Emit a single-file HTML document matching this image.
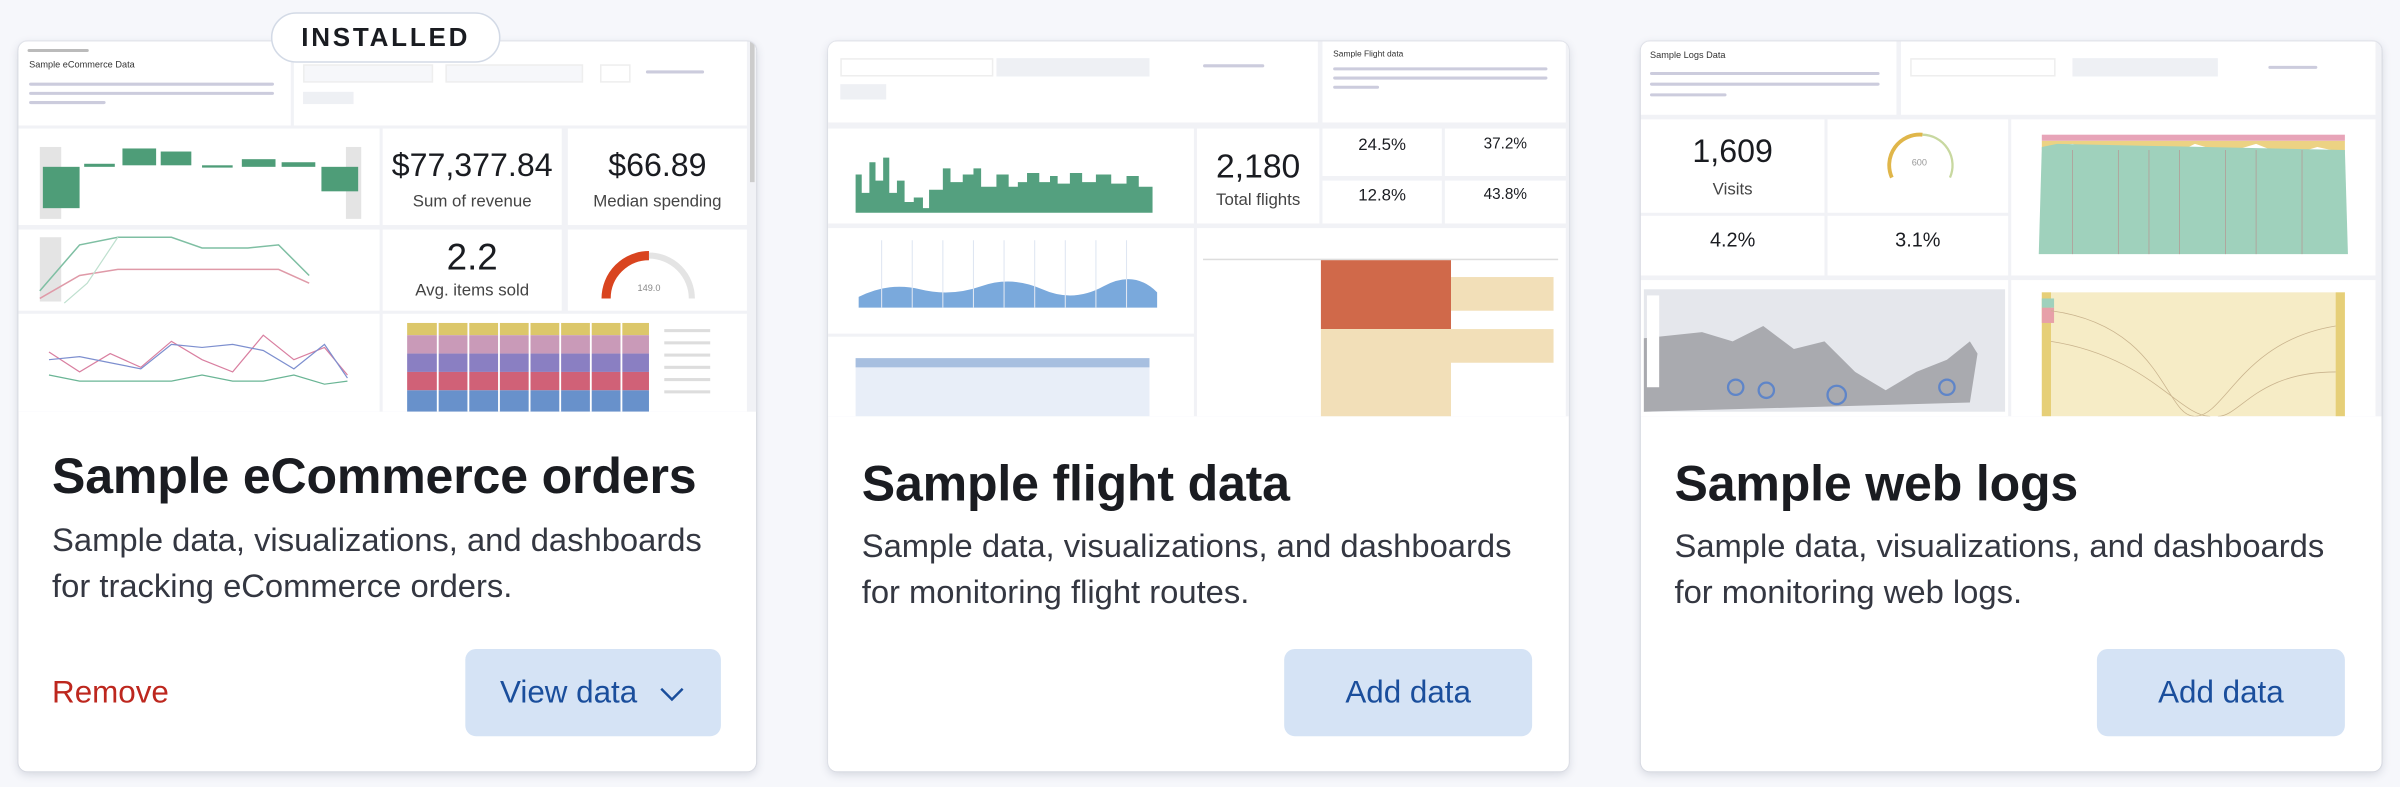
<!DOCTYPE html>
<html><head><meta charset="utf-8">
<style>
*{box-sizing:border-box;margin:0;padding:0}
html,body{width:2400px;height:786px;overflow:hidden;background:#f6f7fb}
#s{position:absolute;left:0;top:0;width:1568px;height:514px;transform:scale(1.5306);transform-origin:0 0;font-family:"Liberation Sans",Arial,sans-serif}
.card{position:absolute;top:27px;width:483px;height:477px;background:#fff;border-radius:6px;box-shadow:0 2px 6px rgba(60,70,100,.18),0 0 1px rgba(60,70,100,.2);overflow:hidden}
.img{position:absolute;left:0;top:0;width:484px;height:242px;background:#f1f2f6;overflow:hidden}
.p{position:absolute;background:#fff}
.t{position:absolute;left:22px;font-size:32.7px;font-weight:700;color:#1a1c21;letter-spacing:-.1px}
.d{position:absolute;left:22px;font-size:21.4px;line-height:30px;color:#343741}
.btn{position:absolute;top:397px;width:163px;height:57px;border-radius:7px;background:#d5e3f5;color:#1a4e9c;font-size:20.5px;display:flex;align-items:center;justify-content:center}
.big{position:absolute;width:100%;text-align:center;color:#1a1c21}
.lbl{position:absolute;width:100%;text-align:center;color:#444;font-size:11px}
.tiny{position:absolute;height:2px;background:#ccd;border-radius:1px}
</style></head><body><div id="s">

<!-- CARD 1 -->
<div class="card" style="left:12px;width:482px">
 <div class="img">
  <div class="p" style="left:0;top:0;width:178px;height:55px">
   <div class="tiny" style="left:6px;top:5px;width:40px;background:#bbb"></div>
   <div style="position:absolute;left:7px;top:13px;font-size:6px;color:#333">Sample eCommerce Data</div>
   <div class="tiny" style="left:7px;top:27px;width:160px"></div><div class="tiny" style="left:7px;top:33px;width:160px"></div><div class="tiny" style="left:7px;top:39px;width:50px"></div>
  </div>
  <div class="p" style="left:180px;top:0;width:296px;height:55px">
   <div style="position:absolute;left:6px;top:15px;width:85px;height:12px;background:#f6f7fa;border:1px solid #eee"></div>
   <div style="position:absolute;left:99px;top:15px;width:90px;height:12px;background:#f6f7fa;border:1px solid #eee"></div>
   <div style="position:absolute;left:200px;top:15px;width:20px;height:12px;border:1px solid #eee"></div>
   <div class="tiny" style="left:230px;top:19px;width:38px"></div>
   <div style="position:absolute;left:6px;top:33px;width:33px;height:8px;background:#eef0f4"></div>
  </div>
  <div class="p" style="left:0;top:57px;width:236px;height:63px">
   <svg width="236" height="63"><rect x="14" y="12" width="14" height="47" fill="#e4e4e4"/><rect x="214" y="12" width="10" height="47" fill="#e4e4e4"/>
   <rect x="16" y="25" width="24" height="27" fill="#4e9d78"/><rect x="43" y="23" width="20" height="2" fill="#4e9d78"/><rect x="68" y="13" width="22" height="11" fill="#4e9d78"/><rect x="93" y="15" width="20" height="9" fill="#4e9d78"/><rect x="120" y="24" width="20" height="1.5" fill="#4e9d78"/><rect x="146" y="20" width="22" height="5" fill="#4e9d78"/><rect x="172" y="22" width="22" height="3" fill="#4e9d78"/><rect x="198" y="25" width="24" height="16" fill="#4e9d78"/></svg>
  </div>
  <div class="p" style="left:238px;top:57px;width:117px;height:63px"><div class="big" style="top:13px;font-size:21px">$77,377.84</div><div class="lbl" style="top:42px">Sum of revenue</div></div>
  <div class="p" style="left:359px;top:57px;width:117px;height:63px"><div class="big" style="top:13px;font-size:21px">$66.89</div><div class="lbl" style="top:42px">Median spending</div></div>
  <div class="p" style="left:0;top:123px;width:236px;height:53px">
   <svg width="236" height="53"><rect x="14" y="5" width="14" height="42" fill="#e4e4e4"/>
   <polyline points="14,40 40,10 65,5 100,5 120,12 150,12 170,10 190,30" fill="none" stroke="#7fbfa3" stroke-width="1"/>
   <polyline points="14,45 40,30 65,26 100,26 150,26 170,26 190,35" fill="none" stroke="#df9aa8" stroke-width="1"/>
   <polyline points="30,48 45,35 65,5" fill="none" stroke="#bfe0cf" stroke-width=".8"/></svg>
  </div>
  <div class="p" style="left:238px;top:123px;width:117px;height:53px"><div class="big" style="top:5px;font-size:24px">2.2</div><div class="lbl" style="top:34px">Avg. items sold</div></div>
  <div class="p" style="left:359px;top:123px;width:117px;height:53px">
   <svg width="117" height="53"><path d="M25,45 A28,28 0 0 1 53,17" fill="none" stroke="#d9441f" stroke-width="6"/><path d="M53,17 A28,28 0 0 1 81,45" fill="none" stroke="#e4e4e4" stroke-width="4"/><text x="53" y="40" font-size="6" fill="#888" text-anchor="middle" font-family="Liberation Sans">149.0</text></svg>
  </div>
  <div class="p" style="left:0;top:178px;width:236px;height:64px">
   <svg width="236" height="64"><polyline points="20,25 40,38 60,26 80,35 100,18 120,30 140,38 160,14 180,30 200,22 215,40" fill="none" stroke="#d97fa0" stroke-width=".8"/><polyline points="20,30 40,28 60,32 80,36 100,20 120,22 140,20 160,24 180,36 200,20 215,42" fill="none" stroke="#7d8fcf" stroke-width=".8"/><polyline points="20,40 40,44 60,44 80,44 100,44 120,40 140,44 160,44 180,40 200,46 215,44" fill="none" stroke="#6ab595" stroke-width=".8"/></svg>
  </div>
  <div class="p" style="left:238px;top:178px;width:238px;height:64px">
   <svg width="238" height="64">
   <rect x="16" y="6" width="158" height="8" fill="#dcc76a"/><rect x="16" y="14" width="158" height="12" fill="#c99ab8"/><rect x="16" y="26" width="158" height="12" fill="#8a7fc2"/><rect x="16" y="38" width="158" height="12" fill="#d06177"/><rect x="16" y="50" width="158" height="14" fill="#6891cb"/>
   <g stroke="#fff" stroke-width="1.2"><line x1="36" y1="0" x2="36" y2="64"/><line x1="56" y1="0" x2="56" y2="64"/><line x1="76" y1="0" x2="76" y2="64"/><line x1="96" y1="0" x2="96" y2="64"/><line x1="116" y1="0" x2="116" y2="64"/><line x1="136" y1="0" x2="136" y2="64"/><line x1="156" y1="0" x2="156" y2="64"/></g>
   <g fill="#ddd"><rect x="184" y="10" width="30" height="2"/><rect x="184" y="18" width="30" height="2"/><rect x="184" y="26" width="30" height="2"/><rect x="184" y="34" width="30" height="2"/><rect x="184" y="42" width="30" height="2"/><rect x="184" y="50" width="30" height="2"/></g></svg>
  </div>
  <div style="position:absolute;left:478px;top:0;width:3px;height:92px;background:#ccc"></div>
 </div>
 <div class="t" style="top:265px">Sample eCommerce orders</div>
 <div class="d" style="top:311px">Sample data, visualizations, and dashboards<br>for tracking eCommerce orders.</div>
 <div style="position:absolute;left:22px;top:414px;font-size:20.5px;color:#bd271e">Remove</div>
 <div class="btn" style="left:292px;width:167px">View data<svg width="18" height="12" style="margin-left:14px" viewBox="0 0 18 12"><path d="M2,3 L9,10 L16,3" fill="none" stroke="#1a4e9c" stroke-width="1.6"/></svg></div>
</div>
<div style="position:absolute;left:177px;top:8px;width:150px;height:33px;border-radius:17px;background:#fff;border:1px solid #d3dae6;font-size:17px;font-weight:700;letter-spacing:1.8px;color:#1a1c21;display:flex;align-items:center;justify-content:center">INSTALLED</div>

<!-- CARD 2 -->
<div class="card" style="left:541px;width:484px">
 <div class="img" style="height:245px">
  <div class="p" style="left:0;top:0;width:320px;height:53px">
   <div style="position:absolute;left:8px;top:11px;width:100px;height:12px;border:1px solid #eee"></div>
   <div style="position:absolute;left:110px;top:11px;width:100px;height:12px;background:#eef0f4"></div>
   <div class="tiny" style="left:245px;top:15px;width:40px"></div>
   <div style="position:absolute;left:8px;top:28px;width:30px;height:10px;background:#eef0f4"></div>
  </div>
  <div class="p" style="left:323px;top:0;width:159px;height:53px"><div style="position:absolute;left:7px;top:6px;font-size:5.5px;color:#333">Sample Flight data</div><div class="tiny" style="left:7px;top:17px;width:140px"></div><div class="tiny" style="left:7px;top:23px;width:140px"></div><div class="tiny" style="left:7px;top:29px;width:30px"></div></div>
  <div class="p" style="left:0;top:57px;width:239px;height:62px">
   <svg width="239" height="62"><path d="M18,55 L18,30 L22,30 L22,42 L27,42 L27,22 L31,22 L31,34 L36,34 L36,19 L40,19 L40,42 L45,42 L45,34 L50,34 L50,48 L56,48 L56,45 L62,45 L62,52 L66,52 L66,40 L75,40 L75,26 L80,26 L80,35 L88,35 L88,30 L95,30 L95,26 L100,26 L100,38 L110,38 L110,30 L118,30 L118,38 L124,38 L124,35 L130,35 L130,29 L138,29 L138,35 L145,35 L145,31 L150,31 L150,36 L158,36 L158,29 L166,29 L166,35 L175,35 L175,30 L185,30 L185,36 L195,36 L195,31 L203,31 L203,38 L212,38 L212,55 Z" fill="#54a07f"/></svg>
  </div>
  <div class="p" style="left:241px;top:57px;width:80px;height:62px"><div class="big" style="top:12px;font-size:22px">2,180</div><div class="lbl" style="top:41px">Total flights</div></div>
  <div class="p" style="left:323px;top:57px;width:78px;height:31px"><div class="big" style="top:5px;font-size:11px">24.5%</div></div>
  <div class="p" style="left:403px;top:57px;width:79px;height:31px"><div class="big" style="top:5px;font-size:10px">37.2%</div></div>
  <div class="p" style="left:323px;top:91px;width:78px;height:28px"><div class="big" style="top:4px;font-size:11px">12.8%</div></div>
  <div class="p" style="left:403px;top:91px;width:79px;height:28px"><div class="big" style="top:4px;font-size:10px">43.8%</div></div>
  <div class="p" style="left:0;top:122px;width:239px;height:69px">
   <svg width="239" height="69"><path d="M20,45 Q40,35 60,40 T100,38 T140,40 T180,38 T215,42 L215,52 L20,52 Z" fill="#7aa9dc"/><g stroke="#dfe6f2" stroke-width=".7"><line x1="35" y1="8" x2="35" y2="52"/><line x1="55" y1="8" x2="55" y2="52"/><line x1="75" y1="8" x2="75" y2="52"/><line x1="95" y1="8" x2="95" y2="52"/><line x1="115" y1="8" x2="115" y2="52"/><line x1="135" y1="8" x2="135" y2="52"/><line x1="155" y1="8" x2="155" y2="52"/><line x1="175" y1="8" x2="175" y2="52"/><line x1="195" y1="8" x2="195" y2="52"/></g></svg>
  </div>
  <div class="p" style="left:241px;top:122px;width:241px;height:123px">
   <div style="position:absolute;left:4px;top:12px;width:232px;height:9px;border-bottom:1px solid #ddd"></div>
   <div style="position:absolute;left:81px;top:21px;width:85px;height:45px;background:#d0694a"></div>
   <div style="position:absolute;left:81px;top:66px;width:85px;height:57px;background:#f2dfb8"></div>
   <div style="position:absolute;left:166px;top:32px;width:67px;height:22px;background:#f2dfb8"></div>
   <div style="position:absolute;left:166px;top:66px;width:67px;height:22px;background:#f2dfb8"></div>
  </div>
  <div class="p" style="left:0;top:193px;width:239px;height:52px"><div style="position:absolute;left:18px;top:14px;width:192px;height:38px;background:#e8eef8"></div><div style="position:absolute;left:18px;top:14px;width:192px;height:6px;background:#a7bfe0"></div></div>
 </div>
 <div class="t" style="top:270px">Sample flight data</div>
 <div class="d" style="top:315px">Sample data, visualizations, and dashboards<br>for monitoring flight routes.</div>
 <div class="btn" style="left:298px;width:162px">Add data</div>
</div>

<!-- CARD 3 -->
<div class="card" style="left:1072px;width:484px">
 <div class="img" style="height:245px">
  <div class="p" style="left:0;top:0;width:167px;height:48px"><div style="position:absolute;left:6px;top:7px;font-size:6px;color:#333">Sample Logs Data</div><div class="tiny" style="left:6px;top:20px;width:150px"></div><div class="tiny" style="left:6px;top:27px;width:150px"></div><div class="tiny" style="left:6px;top:34px;width:50px"></div></div>
  <div class="p" style="left:170px;top:0;width:310px;height:48px">
   <div style="position:absolute;left:6px;top:11px;width:95px;height:12px;border:1px solid #eee"></div>
   <div style="position:absolute;left:112px;top:11px;width:95px;height:12px;background:#eef0f4"></div>
   <div class="tiny" style="left:240px;top:16px;width:32px"></div>
  </div>
  <div class="p" style="left:0;top:51px;width:120px;height:61px"><div class="big" style="top:10px;font-size:21px">1,609</div><div class="lbl" style="top:40px">Visits</div></div>
  <div class="p" style="left:122px;top:51px;width:118px;height:61px"><svg width="118" height="61"><path d="M42,38 A20,20 0 0 1 62,10" fill="none" stroke="#e0b64a" stroke-width="2.5"/><path d="M62,10 A20,20 0 0 1 80,38" fill="none" stroke="#c8d8a0" stroke-width="1.5"/><text x="60" y="30" font-size="6" fill="#999" text-anchor="middle" font-family="Liberation Sans">600</text></svg></div>
  <div class="p" style="left:122px;top:114px;width:118px;height:39px"><div class="big" style="top:8px;font-size:13px">3.1%</div></div>
  <div class="p" style="left:0;top:114px;width:120px;height:39px"><div class="big" style="top:8px;font-size:13px">4.2%</div></div>
  <div class="p" style="left:242px;top:51px;width:238px;height:102px">
   <svg width="238" height="102"><rect x="20" y="10" width="198" height="4" fill="#e7a4b8"/><path d="M20,14 L218,14 L218,22 L200,18 L180,24 L160,16 L140,22 L120,16 L100,26 L80,18 L60,22 L40,16 L20,20 Z" fill="#ecd283"/><path d="M20,18 L30,16 L218,20 L220,88 L18,88 Z" fill="#9fd1bc"/><g stroke="#b49a96" stroke-width=".5"><line x1="40" y1="20" x2="40" y2="88"/><line x1="70" y1="20" x2="70" y2="88"/><line x1="90" y1="20" x2="90" y2="88"/><line x1="110" y1="20" x2="110" y2="88"/><line x1="140" y1="20" x2="140" y2="88"/><line x1="160" y1="20" x2="160" y2="88"/><line x1="190" y1="20" x2="190" y2="88"/></g></svg>
  </div>
  <div class="p" style="left:0;top:156px;width:240px;height:89px">
   <div style="position:absolute;left:2px;top:6px;width:236px;height:80px;background:#e5e7ec"></div>
   <svg width="240" height="89" style="position:absolute;left:0;top:0"><path d="M2,38 L40,34 L60,40 L80,30 L100,45 L120,40 L140,60 L160,72 L180,60 L200,52 L215,40 L220,48 L215,80 L2,86 Z" fill="#a9aaaf"/><g fill="none" stroke="#5f85c8" stroke-width="1.5"><circle cx="62" cy="70" r="5"/><circle cx="82" cy="72" r="5"/><circle cx="128" cy="75" r="6"/><circle cx="200" cy="70" r="5"/></g><rect x="4" y="10" width="8" height="60" fill="#fff"/></svg>
  </div>
  <div class="p" style="left:242px;top:156px;width:238px;height:89px">
   <svg width="238" height="89"><rect x="20" y="8" width="198" height="81" fill="#f6ecc6"/><rect x="20" y="8" width="6" height="81" fill="#e6cf78"/><rect x="212" y="8" width="6" height="81" fill="#e6cf78"/><rect x="20" y="18" width="8" height="10" fill="#e7a0a8"/><rect x="20" y="12" width="8" height="6" fill="#9fd1bc"/><g fill="none" stroke="#c9b38d" stroke-width=".5"><path d="M26,20 C100,30 100,89 120,89"/><path d="M26,40 C90,50 110,89 130,89"/><path d="M212,30 C150,40 140,89 120,89"/><path d="M212,60 C160,60 150,89 135,89"/></g></svg>
  </div>
 </div>
 <div class="t" style="top:270px">Sample web logs</div>
 <div class="d" style="top:315px">Sample data, visualizations, and dashboards<br>for monitoring web logs.</div>
 <div class="btn" style="left:298px;width:162px">Add data</div>
</div>

</div></body></html>
